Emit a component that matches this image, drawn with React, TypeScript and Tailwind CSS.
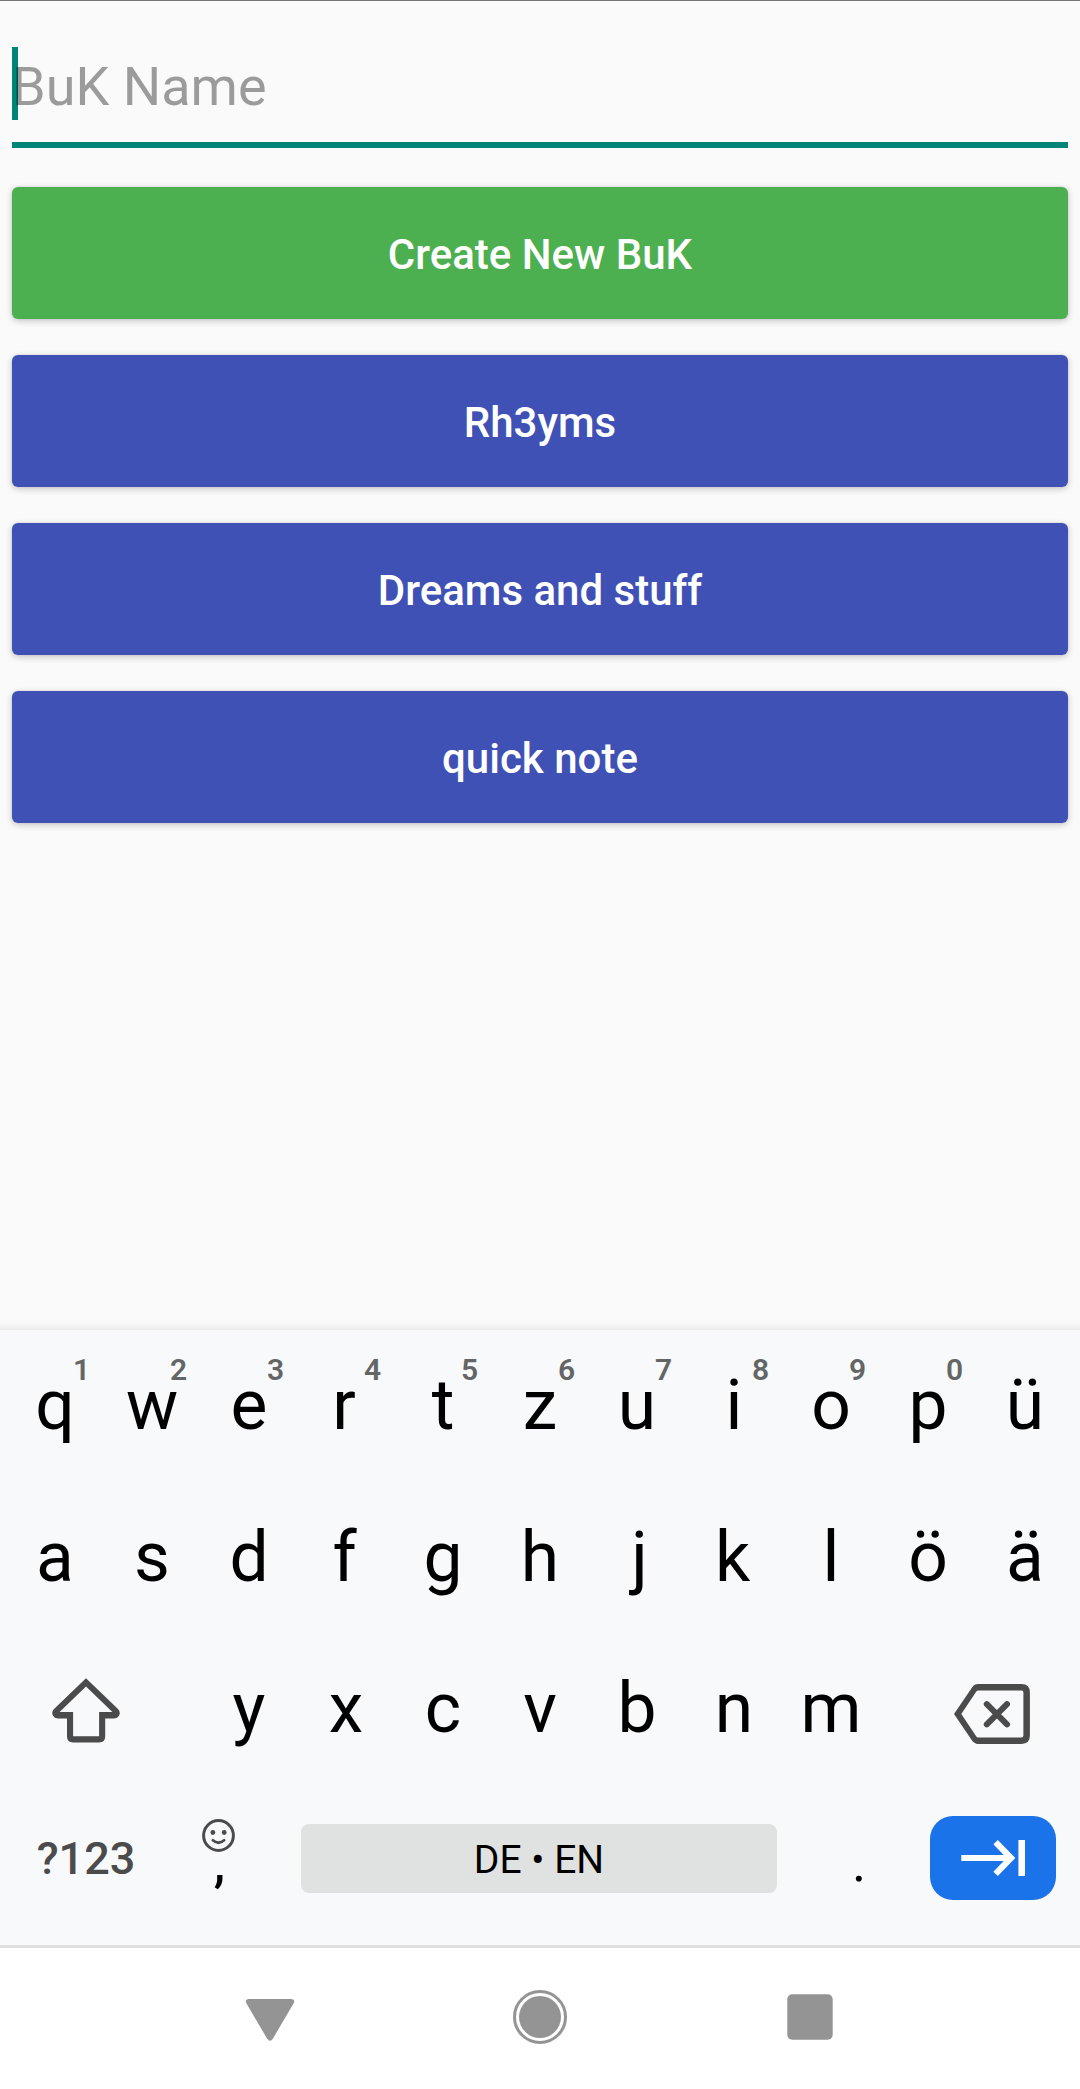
import React from "react";

const ROW_ONE = [
  ["q", "1"], ["w", "2"], ["e", "3"], ["r", "4"], ["t", "5"], ["z", "6"],
  ["u", "7"], ["i", "8"], ["o", "9"], ["p", "0"], ["ü", ""],
];
const ROW_TWO = ["a", "s", "d", "f", "g", "h", "j", "k", "l", "ö", "ä"];
const ROW_THREE = ["y", "x", "c", "v", "b", "n", "m"];
const BOOKS = ["Rh3yms", "Dreams and stuff", "quick note"];

// Optical centring for glyphs with uneven side bearings.
const NUDGE: Record<string, string> = {
  r: "mr-[4px]",
  f: "mr-[3px]",
  k: "mr-[3px]",
  j: "ml-[5px]",
};

function BookButton({ label, color }: { label: string; color: string }) {
  return (
    <button
      className={`flex h-[132px] w-full items-center justify-center rounded-[6px] pt-[3px] text-[42px] leading-none font-medium text-white shadow-[0_2px_7px_rgba(0,0,0,0.2),0_0_3px_rgba(0,0,0,0.1)] ${color}`}
    >
      {label}
    </button>
  );
}

function Key({ label, hint }: { label: string; hint?: string }) {
  return (
    <div className="relative flex h-full w-[97px] items-center justify-center text-[69.5px] leading-none text-black">
      <span className={NUDGE[label] ?? ""}>{label}</span>
      {hint ? (
        <span className="absolute top-[25px] left-[60px] w-[30px] text-center text-[30px] leading-[30px] font-semibold text-[#646665]">
          {hint}
        </span>
      ) : null}
    </div>
  );
}

function ShiftIcon() {
  return (
    <svg width="68" height="65" viewBox="52 1678 68 65" fill="#4b4b4b" fillRule="evenodd">
      <path d="M86 1678.3L118 1709C121.8 1713 118.8 1718.4 114 1718.4H105.2V1736.5Q105.2 1742.4 99.3 1742.4H73Q67 1742.4 67 1736.5V1718.4H58C53.2 1718.4 50.2 1713 54 1709ZM86 1686.6L59.6 1712H73.1V1736.2H99.1V1712H112.4Z" />
    </svg>
  );
}

function BackspaceIcon() {
  return (
    <svg width="76" height="60" viewBox="954 1684 76 60" fill="none">
      <path
        fill="#4b4b4b"
        fillRule="evenodd"
        d="M954 1714L972.2 1687.2Q974.4 1684.1 978 1684.1H1021.5Q1029.9 1684.1 1029.9 1692.5V1735.5Q1029.9 1743.9 1021.5 1743.9H978Q974.4 1743.9 972.2 1740.8ZM961.3 1714L976 1692Q976.8 1690.6 978.3 1690.6H1021.5Q1023.4 1690.6 1023.4 1692.5V1735.5Q1023.4 1737.5 1021.5 1737.5H978.3Q976.8 1737.5 976 1736Z"
      />
      <path d="M986.8 1704.1L1007 1724.3M1007 1704.1L986.8 1724.3" stroke="#4b4b4b" strokeWidth="6" strokeLinecap="round" />
    </svg>
  );
}

function SmileIcon() {
  return (
    <svg width="33" height="33" viewBox="0 0 33 33" fill="none" stroke="#4b4b4b">
      <circle cx="16.5" cy="16.5" r="14.9" strokeWidth="3" />
      <circle cx="10.9" cy="13.5" r="2.4" fill="#4b4b4b" stroke="none" />
      <circle cx="22.2" cy="13.5" r="2.4" fill="#4b4b4b" stroke="none" />
      <path d="M10.8 21.3Q16.5 26.2 22.2 21.3" strokeWidth="2.7" strokeLinecap="round" />
    </svg>
  );
}

function TabIcon() {
  return (
    <svg width="126" height="84" viewBox="930 1816 126 84" fill="none" stroke="#fff" strokeWidth="6.2">
      <path d="M961.3 1858H1011" />
      <path d="M995.6 1842.1L1011 1858L995.6 1873.9" />
      <path d="M1021.7 1840V1876" strokeWidth="6.6" />
    </svg>
  );
}

export default function App() {
  return (
    <div className="flex h-[2089px] w-[1080px] flex-col overflow-hidden bg-[#fafafa] font-['Roboto',sans-serif]">
      <main className="flex h-[1330px] flex-col border-t border-[#757575] px-3">
        <div className="relative flex h-[147px] items-center border-b-6 border-[#008577] pt-[31px]">
          <span className="absolute top-[46px] left-0 h-[73px] w-[6px] bg-[#008577]" />
          <span className="relative text-[54px] leading-[64px] text-black/38">BuK Name</span>
        </div>
        <div className="mt-[39px] flex flex-col gap-9">
          <BookButton label="Create New BuK" color="bg-[#4caf50]" />
          {BOOKS.map((book) => (
            <BookButton key={book} label={book} color="bg-[#3f51b5]" />
          ))}
        </div>
      </main>

      <section className="relative h-[618px] border-b-3 border-[#dfe1e0] bg-[#f8f9fb] px-[6.5px]">
        <div className="absolute -top-2 left-0 h-2 w-full bg-linear-to-b from-transparent to-black/6" />
        <div className="flex h-[151.5px]">
          {ROW_ONE.map(([label, hint]) => (
            <Key key={label} label={label} hint={hint} />
          ))}
        </div>
        <div className="flex h-[151.5px]">
          {ROW_TWO.map((label) => (
            <Key key={label} label={label} />
          ))}
        </div>
        <div className="flex h-[151.5px] items-center">
          <div className="mr-[35px] flex w-[159px] justify-center pt-[3px]">
            <ShiftIcon />
          </div>
          {ROW_THREE.map((label) => (
            <Key key={label} label={label} />
          ))}
          <div className="ml-[74.5px] pt-[10px]">
            <BackspaceIcon />
          </div>
        </div>
        <div className="flex h-[148px] items-center">
          <div className="w-[159px] pt-[1px] text-center text-[45px] leading-[54px] font-medium text-[#4b4b4b]">?123</div>
          <div className="flex h-full w-[106px] flex-col items-center pt-[34.5px]">
            <SmileIcon />
            <span className="-mt-[15px] ml-[2px] text-[51px] leading-[54px] font-medium text-black">,</span>
          </div>
          <div className="ml-[29.5px] flex h-[69px] w-[476px] items-center justify-center rounded-[8px] bg-[#e0e2e1] pt-[4px] text-[39px] leading-none text-black">
            DE • EN
          </div>
          <div className="w-[153px] pt-[9px] pl-[11px] text-center text-[54px] leading-[54px] text-black">.</div>
          <div className="-mt-[2px] h-[84px] w-[126px] rounded-[23px] bg-[#1a73e8]">
            <TabIcon />
          </div>
        </div>
      </section>

      <nav className="flex h-[141px] items-start justify-center gap-[216px] bg-white pt-[42px]">
        <svg width="54" height="54" viewBox="0 0 54 54" fill="#949494">
          <path d="M6 9H48Q52.5 9.5 50.5 13.5L30 48.5Q27 53 24 48.5L3.5 13.5Q1.5 9.5 6 9Z" />
        </svg>
        <svg width="54" height="54" viewBox="0 0 54 54" fill="#949494">
          <circle cx="27" cy="27" r="25.5" fill="none" stroke="#949494" strokeWidth="3" />
          <circle cx="27" cy="27" r="21" />
        </svg>
        <svg width="54" height="54" viewBox="0 0 54 54" fill="#949494">
          <rect x="4.3" y="4.3" width="45.4" height="45.4" rx="5" />
        </svg>
      </nav>
    </div>
  );
}
